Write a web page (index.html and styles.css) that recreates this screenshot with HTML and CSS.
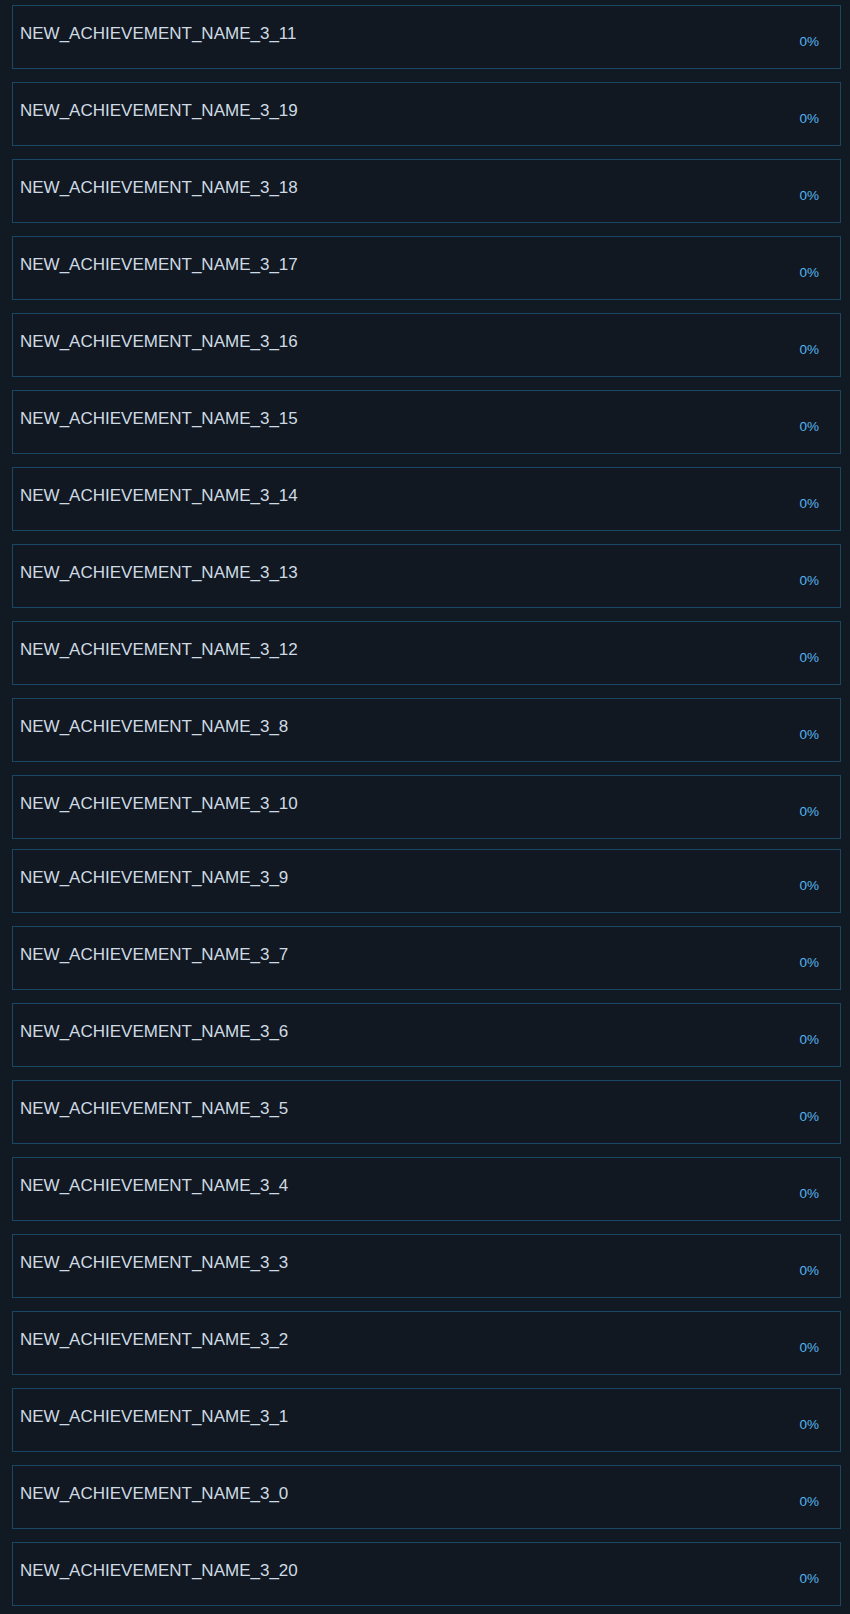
FILE: index.html
```
<!DOCTYPE html>
<html>
	<head>
		<title>Achievements</title>
		<link rel="stylesheet" href="styles.css">
	</head>
	<body>
	<div class="achieveList">
		<div class="achieveRow"><div class="achieveTxt">NEW_ACHIEVEMENT_NAME_3_11</div><div class="achievePercent">0%</div></div>
		<div class="achieveRow"><div class="achieveTxt">NEW_ACHIEVEMENT_NAME_3_19</div><div class="achievePercent">0%</div></div>
		<div class="achieveRow"><div class="achieveTxt">NEW_ACHIEVEMENT_NAME_3_18</div><div class="achievePercent">0%</div></div>
		<div class="achieveRow"><div class="achieveTxt">NEW_ACHIEVEMENT_NAME_3_17</div><div class="achievePercent">0%</div></div>
		<div class="achieveRow"><div class="achieveTxt">NEW_ACHIEVEMENT_NAME_3_16</div><div class="achievePercent">0%</div></div>
		<div class="achieveRow"><div class="achieveTxt">NEW_ACHIEVEMENT_NAME_3_15</div><div class="achievePercent">0%</div></div>
		<div class="achieveRow"><div class="achieveTxt">NEW_ACHIEVEMENT_NAME_3_14</div><div class="achievePercent">0%</div></div>
		<div class="achieveRow"><div class="achieveTxt">NEW_ACHIEVEMENT_NAME_3_13</div><div class="achievePercent">0%</div></div>
		<div class="achieveRow"><div class="achieveTxt">NEW_ACHIEVEMENT_NAME_3_12</div><div class="achievePercent">0%</div></div>
		<div class="achieveRow"><div class="achieveTxt">NEW_ACHIEVEMENT_NAME_3_8</div><div class="achievePercent">0%</div></div>
		<div class="achieveRow tight"><div class="achieveTxt">NEW_ACHIEVEMENT_NAME_3_10</div><div class="achievePercent">0%</div></div>
		<div class="achieveRow"><div class="achieveTxt">NEW_ACHIEVEMENT_NAME_3_9</div><div class="achievePercent">0%</div></div>
		<div class="achieveRow"><div class="achieveTxt">NEW_ACHIEVEMENT_NAME_3_7</div><div class="achievePercent">0%</div></div>
		<div class="achieveRow"><div class="achieveTxt">NEW_ACHIEVEMENT_NAME_3_6</div><div class="achievePercent">0%</div></div>
		<div class="achieveRow"><div class="achieveTxt">NEW_ACHIEVEMENT_NAME_3_5</div><div class="achievePercent">0%</div></div>
		<div class="achieveRow"><div class="achieveTxt">NEW_ACHIEVEMENT_NAME_3_4</div><div class="achievePercent">0%</div></div>
		<div class="achieveRow"><div class="achieveTxt">NEW_ACHIEVEMENT_NAME_3_3</div><div class="achievePercent">0%</div></div>
		<div class="achieveRow"><div class="achieveTxt">NEW_ACHIEVEMENT_NAME_3_2</div><div class="achievePercent">0%</div></div>
		<div class="achieveRow"><div class="achieveTxt">NEW_ACHIEVEMENT_NAME_3_1</div><div class="achievePercent">0%</div></div>
		<div class="achieveRow"><div class="achieveTxt">NEW_ACHIEVEMENT_NAME_3_0</div><div class="achievePercent">0%</div></div>
		<div class="achieveRow"><div class="achieveTxt">NEW_ACHIEVEMENT_NAME_3_20</div><div class="achievePercent">0%</div></div>
	</div>
	</body>
</html>
```

FILE: styles.css
```
body
{
	background: #111a23;
	font-family: 'Liberation Sans', Arial, sans-serif;
	margin: 0;
	padding: 5px 9px 8px 12px;
}

.achieveList
{
	display: flex;
	flex-direction: column;
	gap: 13px;
}

.achieveRow
{
	display: flex;
	justify-content: space-between;
	align-items: flex-start;
	height: 64px;
	box-sizing: border-box;
	border: 1px solid #1a4763;
	background: #111822;
}

.achieveRow.tight
{
	margin-bottom: -3px;
}

.achieveTxt
{
	color: #cfdbe4;
	font-size: 17px;
	line-height: 20px;
	padding: 18px 0 0 7px;
}

.achievePercent
{
	color: #56b4f0;
	font-size: 13.5px;
	line-height: 16px;
	padding: 28px 21px 0 0;
}
```
